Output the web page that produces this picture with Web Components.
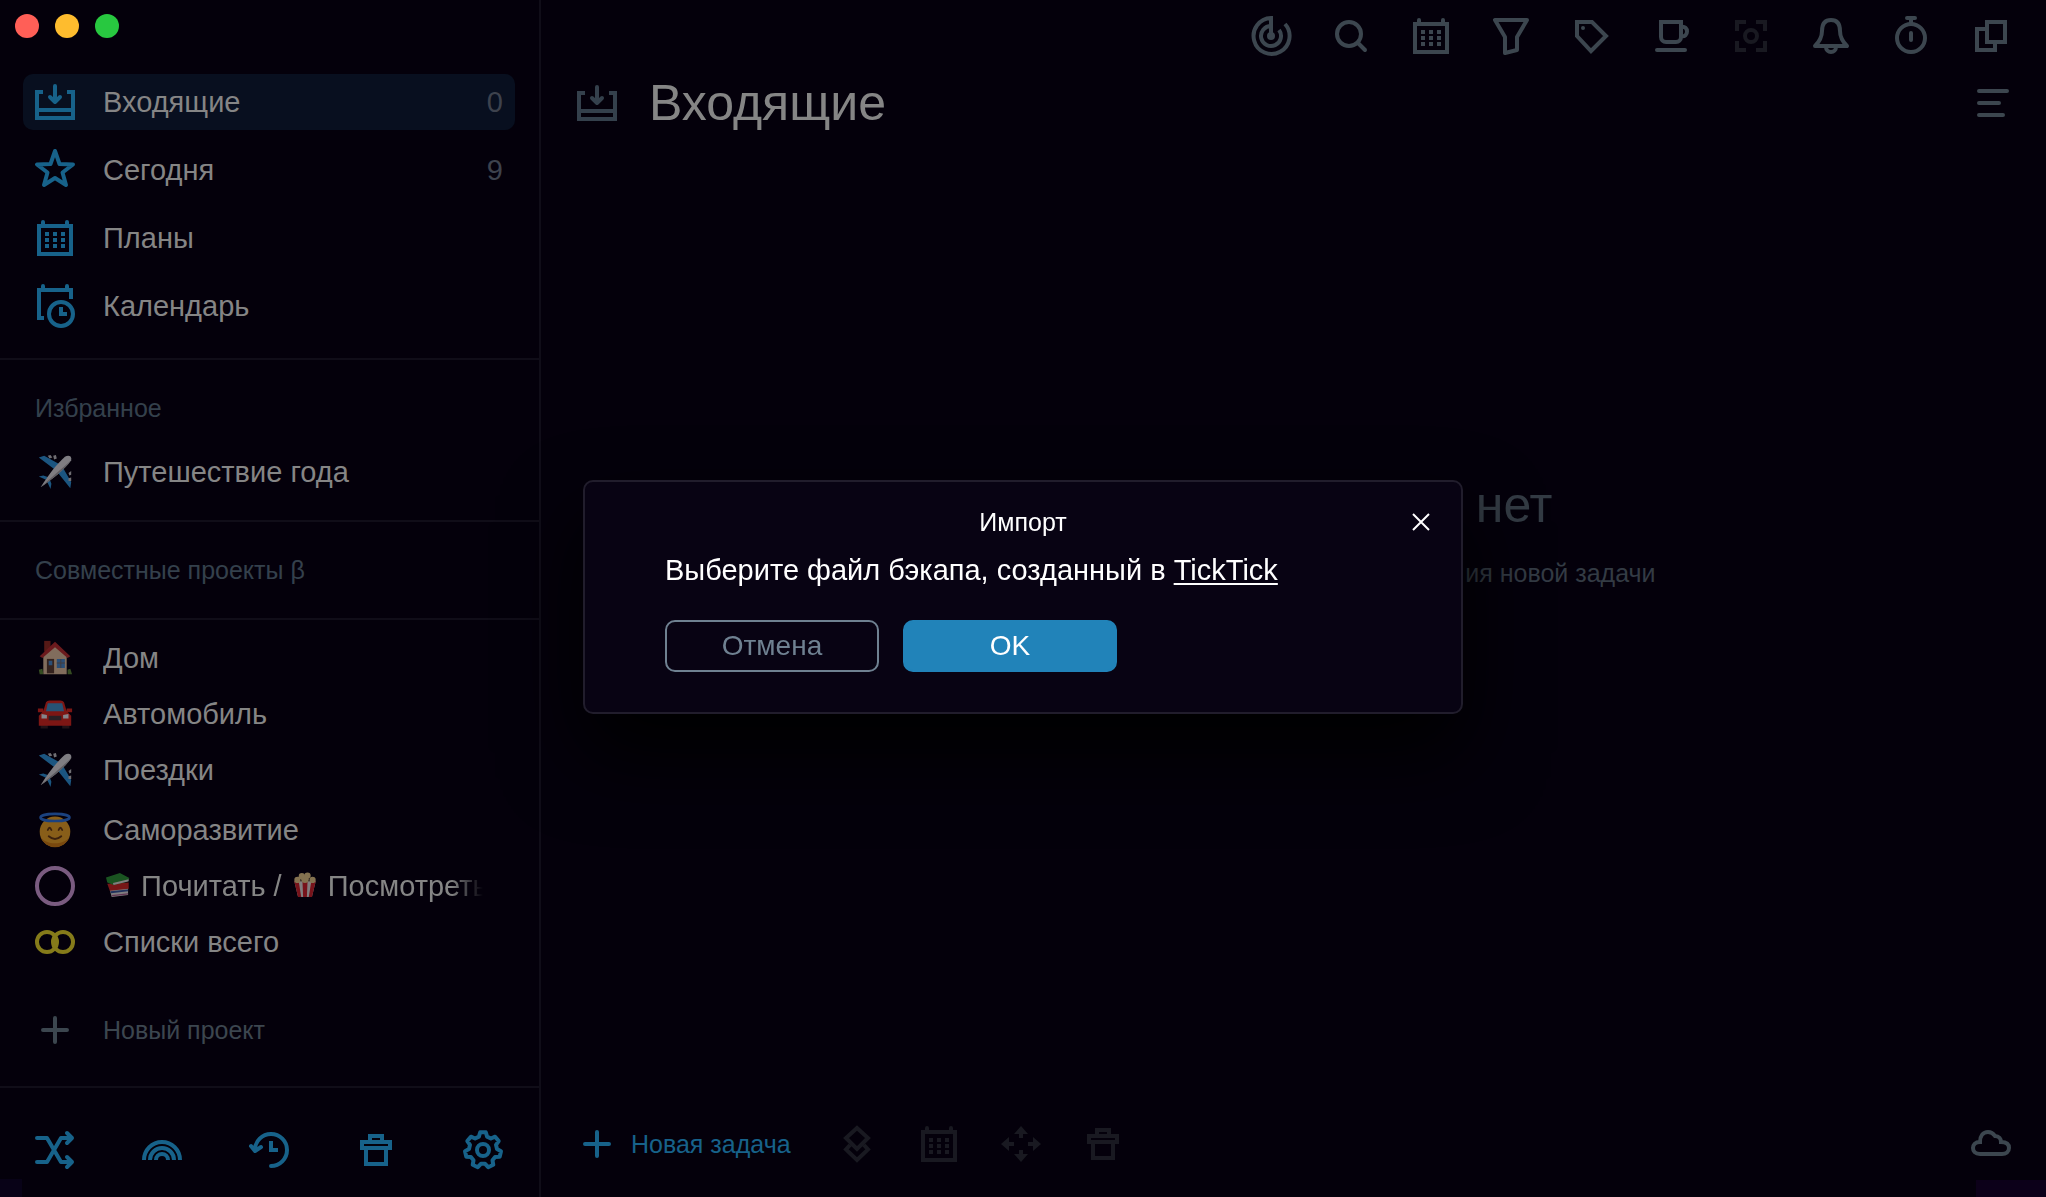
<!DOCTYPE html>
<html lang="ru">
<head>
<meta charset="utf-8">
<title>Входящие</title>
<style>
  html, body {
    margin: 0;
    height: 100%;
  }
  body {
    --accent: #17628a;
    --muted: #3c464f;
    --heading: #34404c;
    --disabled: #191921;
    --line: #100d18;
    --text: #858585;
    background: #04000b;
    color: var(--text);
    font-family: "Liberation Sans", Arial, sans-serif;
    font-size: 29px;
    overflow: hidden;
  }
</style>
</head>
<body>
<todo-app></todo-app>

<script>
/**
 * Builds the outline of the settings gear.
 */
const gearPath = () => {
  const points = []
  for (let i = 0; i < 7; i++) {
    const mid = -90 + i * 360 / 7
    for (const [offset, r] of [[-17, 14], [-9, 18], [9, 18], [17, 14]]) {
      const a = (mid + offset) * Math.PI / 180
      points.push((20 + r * Math.cos(a)).toFixed(1) + ' ' + (20 + r * Math.sin(a)).toFixed(1))
    }
  }
  return 'M' + points.join('L') + 'Z'
}

// All icons are drawn on a 40x40 grid with a 4px stroke
const icons = {
  inbox: '<path d="M8 10H2V36H38V10H32M2 28H38"/><path class="round" d="M20 4V20M15 15l5 5 5-5"/>',
  star: '<path class="round" d="M20 1L24.5 14L38 14.5L27.5 22.5L31 35L20 28L9 35L12.5 22.5L2 14.5L15.5 14Z"/>',
  plans: '<path d="M4 8H36V36H4Z"/><path class="round" d="M8 4V8M32 4V8"/><path d="M10 16h4m4 0h4m4 0h4M10 22h4m4 0h4m4 0h4M10 28h4m4 0h4m4 0h4"/>',
  calendar: '<path d="M9 32H4V4H36V13"/><path class="round" d="M8 0V4M32 0V4"/><circle cx="26" cy="28" r="12"/><path d="M26 21V28H32"/>',
  plus: '<path class="round" d="M20 8V32M8 20H32"/>',
  shuffle: '<path class="round" d="M2 8H12L26 32H37M2 32H12L26 8H37M32 3l5 5-5 5M32 27l5 5-5 5"/>',
  rainbow: '<path d="M2 30a18 18 0 0 1 36 0M8 30a12 12 0 0 1 24 0M14 30a6 6 0 0 1 12 0"/>',
  history: '<path class="round" d="M6 20A16 16 0 1 1 22 36M2 16l4 5 6-4"/><path d="M22 11V20H29"/>',
  trash: '<path d="M6 12H34V18H6ZM14 12V6H26V12M10 18V34H30V18"/>',
  gear: `<path class="round" d="${gearPath()}"/><circle cx="20" cy="20" r="6"/>`,
  target: '<path d="M20 20V2A18 18 0 1 0 34 8M20 10A10 10 0 1 0 28 14"/><circle class="fill" cx="20" cy="20" r="4"/>',
  search: '<circle cx="18" cy="18" r="12"/><path class="round" d="M27 27L34 34"/>',
  filter: '<path d="M4 4H36L26 21V34L14 37V21Z" stroke-linejoin="round"/>',
  tag: '<path d="M6 6H21L35 20L20 35L6 20Z"/><circle class="fill" cx="12" cy="12" r="2"/>',
  cup: '<path d="M10 6H30V21a5 5 0 0 1-5 5H15a5 5 0 0 1-5-5Z"/><path d="M30 11C38 9 38 22 30 20"/><path class="round" d="M6 34H34"/>',
  focus: '<path d="M6 15V6H15M25 6H34V15M34 25V34H25M15 34H6V25"/><circle cx="20" cy="20" r="6"/>',
  bell: '<path class="round" d="M4 30C9 25 11 21 11 15C11 8 14 4 20 4S29 8 29 15C29 21 31 25 36 30ZM15 31a5 5 0 0 0 10 0"/>',
  timer: '<circle cx="20" cy="22" r="14"/><path class="round" d="M16 2H24M20 2V8M20 17V24"/>',
  windows: '<path d="M16 6H34V26H16ZM16 13H6V34H24V26"/>',
  list: '<path class="round" d="M8 8H36M8 20H28M8 32H32"/>',
  layers: '<path d="M20 4L31 14L20 25L9 14ZM13 21L9 25.5L20 36L31 25.5L27 21"/>',
  move: '<path class="fill" d="M20 2l7 8h-5v4h-4v-4h-5ZM20 38l7-8h-5v-4h-4v4h-5ZM0 20l8-7v5h5v4h-5v5ZM40 20l-8-7v5h-5v4h5v5Z"/>',
  cloud: '<path d="M9 30C4 30 2 27 2 24S4 18 9 18C9 12 12 8 17 8C20 8 22 9 24 12C28 12 30 15 30 18C35 18 38 20 38 24S35 30 31 30Z"/>',
  close: '<path style="stroke-width:2" d="M12 12L28 28M28 12L12 28"/>',
  ring: '<circle cx="20" cy="20" r="18"/>',
  rings: '<circle cx="12" cy="20" r="10"/><circle cx="28" cy="20" r="10"/>',
  plane: `<g class="emoji">
    <path fill="#2f9be0" d="M2 4L8 2L26 12L22 19ZM37 38L38 31L28 14L21 18ZM2 25L7 24L16 27L13 30ZM15 39L16 33L13 25L10 28Z"/>
    <path fill="#e4e4e4" d="M4 37C12 24 22 11 31 3C35 1 39 2 38 7C30 18 17 28 4 37Z"/>
    <path fill="#a8a8a8" d="M4 37C16 26 28 16 38 7C30 18 17 28 4 37Z"/>
    <path fill="#c8c8c8" d="M12 2l3-1 2 3-3 1zM18 2l3-1 1 4-3 1zM35 21l3-2v4l-2 1zM35 27l3-1v4l-3 0z"/></g>`,
  house: `<g class="emoji">
    <path fill="#9a2f20" d="M8 1h7v12H8z"/>
    <path fill="#e8c6a0" d="M7 17L20 7L33 17V38H7Z"/>
    <path fill="#c0302c" d="M20 2L37 18L34 20L20 8L6 20L3 18Z"/>
    <path fill="#5d4030" d="M11 21h8v16h-8z"/><path fill="#4a8fd0" d="M13 23h4v5h-4zM22 21h9v10h-9z"/>
    <path fill="#7a6a60" d="M26 21h1v10h-1zM22 25h9v1h-9z"/>
    <path fill="#5e8a35" d="M2 33l4-1 1 6H3zM34 33l3-1 2 6h-5z"/></g>`,
  car: `<g class="emoji">
    <path fill="#3b2222" d="M4 29h8v7H4zM28 29h8v7h-8z"/>
    <path fill="#e0281c" d="M7 17L10 7Q11 5 14 5H26Q29 5 30 7L33 17L38 22V33H2V22ZM1 14h6v4H1zM33 14h6v4h-6z"/>
    <path fill="#4497cc" d="M10 17L12 8H28L30 17Z"/>
    <path fill="#4a3a3a" d="M13 22h14v5H13z"/>
    <path fill="#eef2f4" d="M5 20l6 1v4H5zM35 20l-6 1v4h6z"/></g>`,
  angel: `<g class="emoji">
    <circle cx="20" cy="22" r="17" fill="#f4ab25"/>
    <path fill="#d98412" d="M4 28a17 17 0 0 0 32 0c-7 9-25 9-32 0z"/>
    <ellipse cx="20" cy="6" rx="16" ry="4" fill="none" stroke="#2f78e0" stroke-width="3"/>
    <path fill="none" stroke="#6a3c10" stroke-width="2" stroke-linecap="round" d="M12 20q2-5 4 0M24 20q2-5 4 0M13 27q7 6 14 0"/></g>`,
  books: `<g class="emoji">
    <path fill="#e8e4e0" d="M7 28L10 39L36 36V24Z"/>
    <path fill="#3a5aa0" d="M8 30l28-3v3L9 33z"/><path fill="#b06090" d="M10 36l26-3v2L11 38z"/>
    <path fill="#d82a24" d="M3 18L7 29L37 26V16Z"/>
    <path fill="#2f9a35" d="M1 8L23 1L38 9L35 15L13 20L3 16Z"/><path fill="#e8e4e0" d="M12 17L37 11V14L13 20Z"/></g>`,
  popcorn: `<g class="emoji">
    <path fill="#e9e4df" d="M3 14H37L31 39H9Z"/>
    <path fill="#d8232a" d="M3 14h7l4 25H9zM16 14h8l-1 25h-6zM30 14h7l-6 25h-5z"/>
    <g fill="#efd08a"><circle cx="8" cy="12" r="5"/><circle cx="15" cy="6" r="5"/><circle cx="24" cy="5" r="5"/><circle cx="32" cy="12" r="5"/><circle cx="20" cy="11" r="6"/></g></g>`
}

/**
 * Attaches an open shadow root filled with the given markup.
 */
const render = (element, html) => {
  const template = document.createElement('template')
  template.innerHTML = html
  element.attachShadow({ mode: 'open' }).appendChild(template.content.cloneNode(true))
}

customElements.define('app-icon',
  class extends HTMLElement {
    constructor () {
      super()
      render(this, `
<style>
  :host {
    display: block;
    flex: none;
    width: 40px;
    height: 40px;
  }
  svg {
    display: block;
    width: 100%;
    height: 100%;
    overflow: visible;
    fill: none;
    stroke: currentColor;
    stroke-width: 4;
  }
  .round {
    stroke-linecap: round;
    stroke-linejoin: round;
  }
  .fill {
    fill: currentColor;
    stroke: none;
  }
  .emoji {
    stroke: none;
    opacity: 0.55;
    transform: scale(0.9);
    transform-origin: 20px 20px;
  }
</style>
<svg viewBox="0 0 40 40" aria-hidden="true">${icons[this.getAttribute('name')]}</svg>
`)
    }
  }
)

customElements.define('icon-button',
  class extends HTMLElement {
    constructor () {
      super()
      render(this, `
<style>
  :host {
    display: block;
    color: var(--muted);
  }
  :host([disabled]) {
    color: var(--disabled);
  }
  button {
    display: flex;
    align-items: center;
    gap: 14px;
    padding: 0;
    border: 0;
    background: none;
    color: inherit;
    font: inherit;
  }
</style>
<button aria-label="${this.getAttribute('label')}" ${this.hasAttribute('disabled') ? 'disabled' : ''}>
  <app-icon name="${this.getAttribute('icon')}"></app-icon><slot></slot>
</button>
`)
    }
  }
)

customElements.define('window-controls',
  class extends HTMLElement {
    constructor () {
      super()
      render(this, `
<style>
  :host {
    display: flex;
    gap: 16px;
    padding: 14px 15px;
  }
  button {
    width: 24px;
    height: 24px;
    padding: 0;
    border: 0;
    border-radius: 50%;
  }
  .close { background: #ff5f57; }
  .minimize { background: #febc2e; }
  .zoom { background: #28c840; }
</style>
<button class="close" aria-label="Закрыть"></button>
<button class="minimize" aria-label="Свернуть"></button>
<button class="zoom" aria-label="Развернуть"></button>
`)
    }
  }
)

customElements.define('nav-item',
  class extends HTMLElement {
    constructor () {
      super()
      const count = this.getAttribute('count')
      render(this, `
<style>
  :host {
    display: block;
    --icon: var(--accent);
  }
  a {
    display: flex;
    align-items: center;
    gap: 28px;
    height: 56px;
    padding: 0 12px;
    border-radius: 10px;
    color: inherit;
    text-decoration: none;
  }
  :host([selected]) a {
    background: #080f1f;
  }
  :host([faint]) {
    --icon: var(--muted);
    color: var(--muted);
    font-size: 25px;
  }
  app-icon {
    color: var(--icon);
  }
  .label {
    flex: 1;
    min-width: 0;
    overflow: hidden;
    white-space: nowrap;
    line-height: 40px;
  }
  /* long names fade out instead of an ellipsis */
  :host([fade]) .label {
    margin-right: 20px;
    -webkit-mask-image: linear-gradient(to left, transparent, #000 32px);
    mask-image: linear-gradient(to left, transparent, #000 32px);
  }
  .count {
    color: #3d424d;
  }
</style>
<a href="#">
  <app-icon name="${this.getAttribute('icon')}"></app-icon>
  <span class="label"><slot></slot></span>
  ${count ? `<span class="count">${count}</span>` : ''}
</a>
`)
    }
  }
)

customElements.define('side-section',
  class extends HTMLElement {
    constructor () {
      super()
      render(this, `
<style>
  :host {
    display: flex;
    flex-direction: column;
    gap: 20px;
    padding: 32px 24px 32px 23px;
    border-bottom: 2px solid var(--line);
  }
  :host([filled]) {
    padding-bottom: 20px;
  }
  h2 {
    margin: 0 12px;
    color: var(--heading);
    font-size: 25px;
    font-weight: normal;
    line-height: 32px;
  }
</style>
<h2>${this.getAttribute('heading')}</h2>
<slot></slot>
`)
    }
  }
)

customElements.define('side-bar',
  class extends HTMLElement {
    constructor () {
      super()
      render(this, `
<style>
  :host {
    display: flex;
    flex: none;
    flex-direction: column;
    box-sizing: border-box;
    width: 541px;
    border-right: 2px solid var(--line);
  }
  .main {
    display: flex;
    flex-direction: column;
    gap: 12px;
    padding: 22px 24px 24px 23px;
    border-bottom: 2px solid var(--line);
  }
  .projects {
    flex: 1;
    padding: 10px 24px 28px 23px;
  }
  .projects .group {
    margin-bottom: 4px;
  }
  .projects .new {
    margin-top: 32px;
  }
  .inline {
    display: inline-block;
    width: 28px;
    height: 28px;
    margin: 0 1px;
    vertical-align: -3px;
  }
  .pink { --icon: #7a5b80; }
  .yellow { --icon: #857b1a; }
  footer {
    display: flex;
    justify-content: space-between;
    padding: 42px 36px 27px 35px;
    border-top: 2px solid var(--line);
  }
  footer icon-button {
    color: var(--accent);
  }
</style>
<window-controls></window-controls>
<nav class="main">
  <nav-item icon="inbox" count="0" selected>Входящие</nav-item>
  <nav-item icon="star" count="9">Сегодня</nav-item>
  <nav-item icon="plans">Планы</nav-item>
  <nav-item icon="calendar">Календарь</nav-item>
</nav>
<side-section heading="Избранное" filled>
  <nav-item icon="plane">Путешествие года</nav-item>
</side-section>
<side-section heading="Совместные проекты β"></side-section>
<nav class="projects">
  <div class="group">
    <nav-item icon="house">Дом</nav-item>
    <nav-item icon="car">Автомобиль</nav-item>
    <nav-item icon="plane">Поездки</nav-item>
  </div>
  <nav-item icon="angel">Саморазвитие</nav-item>
  <nav-item class="pink" icon="ring" fade><app-icon class="inline" name="books"></app-icon> Почитать / <app-icon class="inline" name="popcorn"></app-icon> Посмотреть</nav-item>
  <nav-item class="yellow" icon="rings">Списки всего</nav-item>
  <nav-item class="new" icon="plus" faint>Новый проект</nav-item>
</nav>
<footer>
  <icon-button icon="shuffle" label="Перемешать"></icon-button>
  <icon-button icon="rainbow" label="Радуга"></icon-button>
  <icon-button icon="history" label="История"></icon-button>
  <icon-button icon="trash" label="Корзина"></icon-button>
  <icon-button icon="gear" label="Настройки"></icon-button>
</footer>
`)
    }
  }
)

customElements.define('task-view',
  class extends HTMLElement {
    constructor () {
      super()
      render(this, `
<style>
  :host {
    display: flex;
    flex: 1;
    flex-direction: column;
    min-width: 0;
  }
  .toolbar {
    display: flex;
    justify-content: flex-end;
    gap: 40px;
    padding: 16px 35px;
  }
  header {
    display: flex;
    align-items: center;
    gap: 32px;
    height: 62px;
    padding: 0 35px 0 36px;
  }
  header app-icon {
    color: var(--heading);
  }
  h1 {
    flex: 1;
    margin: 0;
    font-size: 50px;
    font-weight: normal;
    line-height: 56px;
  }
  .empty {
    display: flex;
    flex: 1;
    flex-direction: column;
    justify-content: center;
    gap: 24px;
    width: 724px;
    margin: 0 auto;
    padding-bottom: 176px;
    color: #333b44;
    text-align: right;
  }
  .empty h2 {
    margin: 0 103px;
    font-size: 50px;
    font-weight: normal;
    line-height: 56px;
  }
  .empty p {
    margin: 0;
    font-size: 25px;
    line-height: 32px;
  }
  footer {
    display: flex;
    gap: 42px;
    padding: 16px 35px 33px 36px;
    font-size: 25px;
  }
  .new {
    margin-right: 4px;
    color: var(--accent);
  }
  .sync {
    margin-left: auto;
  }
</style>
<div class="toolbar">
  <icon-button icon="target" label="Цель"></icon-button>
  <icon-button icon="search" label="Поиск"></icon-button>
  <icon-button icon="plans" label="Планы"></icon-button>
  <icon-button icon="filter" label="Фильтр"></icon-button>
  <icon-button icon="tag" label="Метки"></icon-button>
  <icon-button icon="cup" label="Перерыв"></icon-button>
  <icon-button icon="focus" label="Фокус" disabled></icon-button>
  <icon-button icon="bell" label="Напоминания"></icon-button>
  <icon-button icon="timer" label="Таймер"></icon-button>
  <icon-button icon="windows" label="Новое окно"></icon-button>
</div>
<header>
  <app-icon name="inbox"></app-icon>
  <h1>Входящие</h1>
  <icon-button icon="list" label="Меню"></icon-button>
</header>
<div class="empty">
  <h2>нет</h2>
  <p>ия новой задачи</p>
</div>
<footer>
  <icon-button class="new" icon="plus" label="Новая задача">Новая задача</icon-button>
  <icon-button icon="layers" label="Проект" disabled></icon-button>
  <icon-button icon="plans" label="Дата" disabled></icon-button>
  <icon-button icon="move" label="Переместить" disabled></icon-button>
  <icon-button icon="trash" label="Удалить" disabled></icon-button>
  <icon-button class="sync" icon="cloud" label="Синхронизация"></icon-button>
</footer>
`)
    }
  }
)

customElements.define('import-dialog',
  class extends HTMLElement {
    constructor () {
      super()
      render(this, `
<style>
  :host {
    position: fixed;
    inset: 0;
    display: flex;
    align-items: center;
    justify-content: center;
    padding-bottom: 3px;
    color: #fff;
  }
  section {
    box-sizing: border-box;
    width: 880px;
    max-width: 90%;
    padding: 20px 0 40px;
    border: 2px solid #211d2c;
    border-radius: 10px;
    background: #080313;
    box-shadow: 0 40px 80px #000;
  }
  header {
    display: grid;
    grid-template-columns: 1fr auto 1fr;
    align-items: center;
    padding: 0 20px;
  }
  h2 {
    grid-column: 2;
    margin: 0;
    font-size: 25px;
    font-weight: normal;
  }
  header icon-button {
    justify-self: end;
    color: #fff;
  }
  .body {
    padding: 10px 80px 0;
  }
  p {
    margin: 0 0 32px;
    line-height: 36px;
  }
  p a {
    color: inherit;
    text-decoration-thickness: 2px;
    text-underline-offset: 3px;
    text-decoration-skip-ink: none;
  }
  .actions {
    display: flex;
    gap: 24px;
  }
  .actions button {
    width: 214px;
    height: 52px;
    padding: 0;
    border: 2px solid #6f8191;
    border-radius: 10px;
    background: none;
    color: #6f8191;
    font: inherit;
    font-size: 28px;
  }
  .actions .ok {
    border-color: #2183b9;
    background: #2183b9;
    color: #fff;
  }
</style>
<section role="dialog" aria-labelledby="title">
  <header>
    <h2 id="title">Импорт</h2>
    <icon-button icon="close" label="Закрыть"></icon-button>
  </header>
  <div class="body">
    <p>Выберите файл бэкапа, созданный в <a href="#">TickTick</a></p>
    <div class="actions">
      <button>Отмена</button>
      <button class="ok">OK</button>
    </div>
  </div>
</section>
`)
    }
  }
)

customElements.define('todo-app',
  class extends HTMLElement {
    constructor () {
      super()
      render(this, `
<style>
  :host {
    display: flex;
    height: 100vh;
    /* desktop showing through at the bottom corners of the window */
    background:
      linear-gradient(#080217, #080217) left bottom / 22px 18px no-repeat,
      linear-gradient(#0c0019, #0c0019) right bottom / 70px 17px no-repeat;
  }
</style>
<side-bar></side-bar>
<task-view></task-view>
<import-dialog></import-dialog>
`)
    }
  }
)
</script>
</body>
</html>
